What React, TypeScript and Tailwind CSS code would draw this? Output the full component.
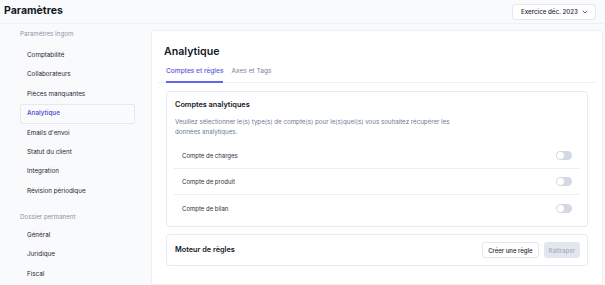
import React from "react";

const navTop = ["Comptabilité", "Collaborateurs", "Pièces manquantes", "Analytique", "Emails d'envoi", "Statut du client", "Integration", "Révision périodique"];
const navBottom = ["Général", "Juridique", "Fiscal"];

function NavItem({ label, active }: { label: string; active?: boolean }) {
  return (
    <div
      className={
        "h-[19.4px] flex items-center pl-[6px] text-[6.3px] rounded-[2px] border " +
        (active ? "border-[#e6e8ee] bg-[#fafbfc] text-[#5b5bd6] font-semibold" : "border-transparent text-[#1f2430]")
      }
    >
      {label}
    </div>
  );
}

function Toggle() {
  return (
    <div className="w-[16px] h-[9px] rounded-full bg-[#d3d9e3] flex items-center px-[1px]">
      <div className="w-[7px] h-[7px] rounded-full bg-white" />
    </div>
  );
}

function Row({ label, last }: { label: string; last?: boolean }) {
  return (
    <div className={"h-[26px] flex items-center justify-between pl-[8px] pr-[8px] " + (last ? "" : "border-b border-[#eceef2]")}>
      <span className="text-[6px] text-[#2b2f3a]">{label}</span>
      <Toggle />
    </div>
  );
}

export default function App() {
  return (
    <div className="w-[605px] h-[285px] overflow-hidden bg-[#f9fafb] flex flex-col" style={{ fontFamily: "Inter, 'Noto Sans', sans-serif" }}>
      <div className="h-[24px] shrink-0 flex items-center justify-between pl-[4px] pr-[9px] border-b border-[#eef0f3]">
        <span className="text-[10.5px] font-bold text-[#111827] -mt-[2px]">Paramètres</span>
        <div className="h-[16px] pl-[8px] pr-[7px] flex items-center gap-[4px] bg-white border border-[#e5e7eb] rounded-[3px] text-[6.2px] font-medium text-[#1f2937]">
          <span>Exercice déc. 2023</span>
          <svg width="6" height="4" viewBox="0 0 6 4" fill="none"><path d="M0.8 0.8L3 3L5.2 0.8" stroke="#374151" strokeWidth="0.8" /></svg>
        </div>
      </div>
      <div className="flex flex-1 min-h-0">
        <div className="w-[151px] shrink-0 pl-[20px] pr-[16px] pt-[6px]">
          <div className="h-[8px] flex items-center text-[6.2px] text-[#8a94a6]">Paramètres Ingom</div>
          <div className="mt-[8px]">
            {navTop.map((l) => (
              <NavItem key={l} label={l} active={l === "Analytique"} />
            ))}
          </div>
          <div className="mt-[11.5px] h-[8px] flex items-center text-[6.2px] text-[#8a94a6]">Dossier permanent</div>
          <div className="mt-[5.5px]">
            {navBottom.map((l) => (
              <NavItem key={l} label={l} />
            ))}
          </div>
        </div>
        <div className="flex-1 mt-[6px] mr-[2px] bg-white border border-[#eef0f3] rounded-t-[3px] pt-[12px]">
          <div className="pl-[12px] text-[10.6px] font-semibold text-[#111827] leading-[17px]">Analytique</div>
          <div className="mx-[6px] mt-[6px] border-b border-[#eef0f3] flex gap-[8px] pl-[8px]">
            <div className="text-[6.6px] font-medium text-[#5b5bd6] pb-[5px] border-b-2 border-[#6366f1] -mb-[1px] leading-[10px]">Comptes et règles</div>
            <div className="text-[6.6px] text-[#7a8496] leading-[10px]">Axes et Tags</div>
          </div>
          <div className="mx-[14px] mt-[8px] border border-[#e8ebf0] rounded-[3px] px-[7px] pt-[8px] pb-[5px]">
            <div className="pl-[1px] text-[7.3px] font-semibold text-[#111827] leading-[10px]">Comptes analytiques</div>
            <div className="pl-[1px] mt-[7px] text-[6.2px] text-[#6b7a94] leading-[9.5px] w-[290px]">
              Veuillez sélectionner le(s) type(s) de compte(s) pour le(s)quel(s) vous souhaitez récupérer les données analytiques.
            </div>
            <div className="mt-[7px]">
              <Row label="Compte de charges" />
              <Row label="Compte de produit" />
              <Row label="Compte de bilan" last />
            </div>
          </div>
          <div className="mx-[14px] mt-[7px] h-[32px] border border-[#e8ebf0] rounded-[3px] pl-[8px] pr-[7px] flex items-center justify-between">
            <span className="text-[7.3px] font-semibold text-[#111827]">Moteur de règles</span>
            <div className="flex gap-[5px]">
              <div className="h-[16px] px-[5px] flex items-center border border-[#e5e7eb] rounded-[3px] bg-white text-[6px] font-medium text-[#1f2937]">Créer une règle</div>
              <div className="h-[16px] px-[5px] flex items-center rounded-[3px] bg-[#e2e7ef] text-[6px] font-medium text-[#a3acba]">Rattraper</div>
            </div>
          </div>
        </div>
      </div>
    </div>
  );
}
